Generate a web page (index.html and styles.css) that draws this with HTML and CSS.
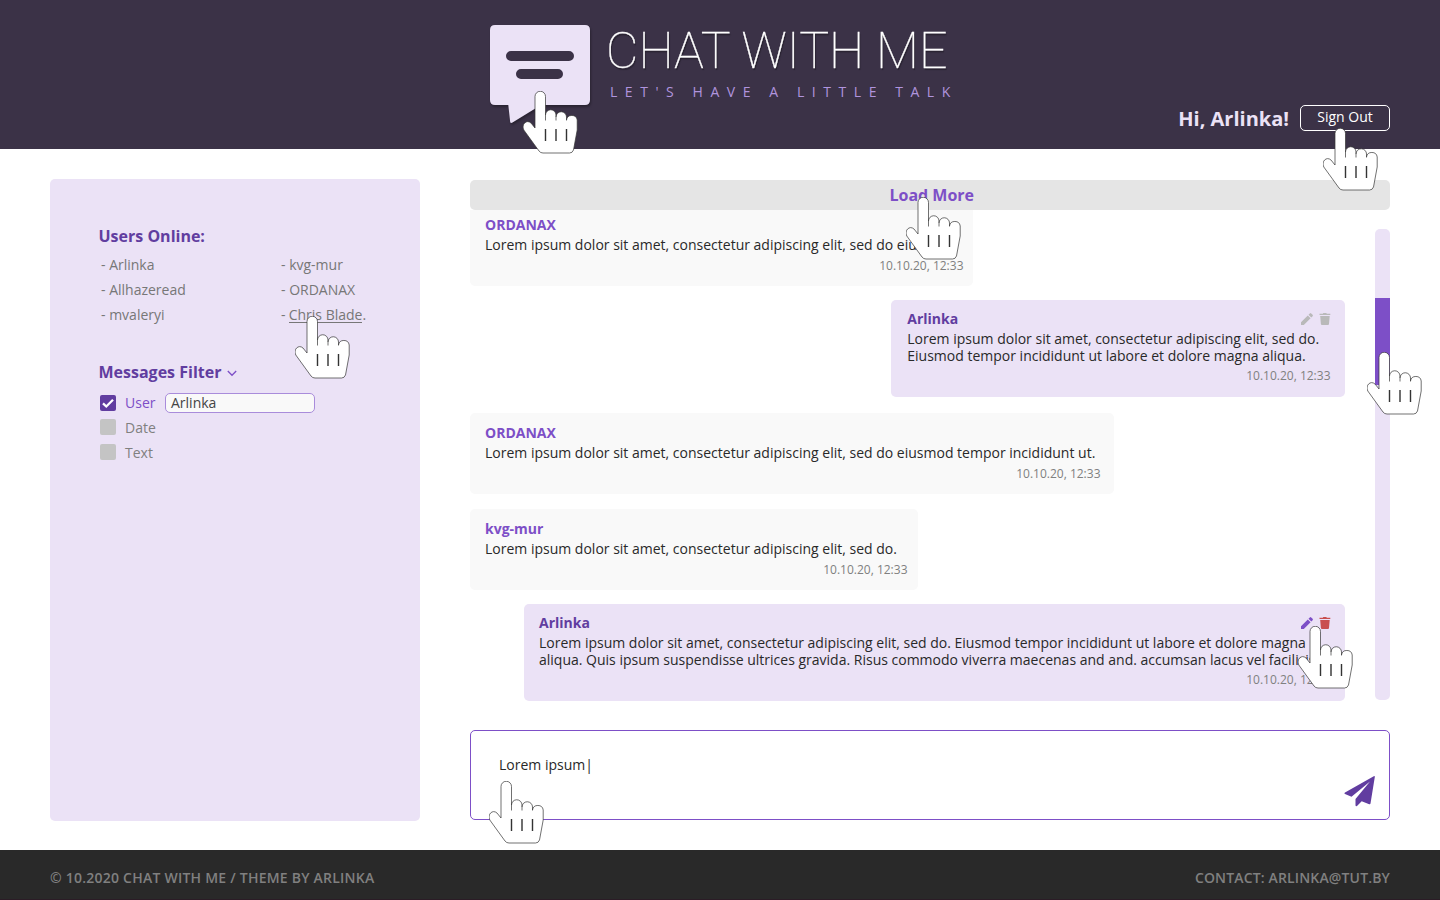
FILE: index.html
```html
<!DOCTYPE html>
<html lang="en">
<head>
<meta charset="utf-8">
<title>Chat With Me</title>
<link rel="stylesheet" href="styles.css">
</head>
<body>
<svg class="defs" width="0" height="0">
  <symbol id="hand" viewBox="0.5 0.5 56 64">
    <path class="hand-fill" d="M12.500 37.500V6a5.250 5.250 0 0 1 10.500 0V24.500a5.250 5.250 0 0 1 10.500 0V26.500a5.250 5.250 0 0 1 10.500 0V29.500a5.400 5.250 0 0 1 10.700 0V39.500L51 59.500Q50 62.500 47 62.500H20.500Q18 62.500 16.500 60.500L1.300 39.500C-1.500 34 4 28.500 8.500 32.500Z"/>
    <path class="hand-line" d="M12.500 37.500V6a5.250 5.250 0 0 1 10.500 0V30M23 24.500a5.250 5.250 0 0 1 10.500 0V30M33.500 26.500a5.250 5.250 0 0 1 10.500 0V30M44 29.500a5.400 5.250 0 0 1 10.700 0V39.500L51 59.500Q50 62.500 47 62.500H20.500Q18 62.500 16.500 60.500L1.300 39.500C-1.500 34 4 28.500 8.500 32.500L12.500 37.500"/>
    <path class="hand-bars" d="M23 38.500v12M33.500 38.500v12M44 38.500v12"/>
  </symbol>
  <symbol id="pencil" viewBox="0 0 12 12"><path d="M0 9.200 6.800 2.400 9.600 5.200 2.800 12H0ZM7.500 1.700 8.800 .4Q9.500 -.2 10.200.4L11.600 1.800Q12.200 2.500 11.600 3.200L10.300 4.500Z"/></symbol>
  <symbol id="trash" viewBox="0 0 12 12"><path d="M.5.800H3.800L4.300 0H7.300L7.800.800H11.300V2H.5ZM1.200 3H10.700L10 11Q9.900 12 9 12H3Q2 12 1.900 11Z"/></symbol>
</svg>

<header class="header">
  <div class="brand">
    <svg class="logo" viewBox="0 0 102 102" width="102" height="102">
      <path class="bubble" d="M5 0H95Q100 0 100 5V75Q100 80 95 80H51L22.500 97.500Q20.600 98.500 20.200 97L18.300 80H5Q0 80 0 75V5Q0 0 5 0Z"/>
      <path class="bubble-lines" d="M21 31H79M31 49H68"/>
    </svg>
    <div class="brand-text">
      <h1 class="title">CHAT WITH ME</h1>
      <p class="subtitle">LET'S HAVE A LITTLE TALK</p>
    </div>
  </div>
  <div class="account">
    <span class="greeting">Hi, Arlinka!</span>
    <button class="signout">Sign Out</button>
  </div>
</header>

<main class="main">
  <aside class="sidebar">
    <h2 class="side-title">Users Online:</h2>
    <ul class="users">
      <li>- Arlinka</li><li>- kvg-mur</li>
      <li>- Allhazeread</li><li>- ORDANAX</li>
      <li>- mvaleryi</li><li>- <span class="hovered">Chris Blade</span>.</li>
    </ul>
    <h2 class="side-title filter-title">Messages Filter
      <svg class="chevron" viewBox="0 0 10 7" width="10" height="7"><path d="M.8 1 5 5.300 9.200 1"/></svg>
    </h2>
    <div class="filters">
      <div class="filter active">
        <span class="box"><svg viewBox="0 0 16 16" width="16" height="16"><path d="M3 8.300 6.300 11.500 13 4.800"/></svg></span>
        <span class="filter-name">User</span><span class="field">Arlinka</span>
      </div>
      <div class="filter"><span class="box"></span><span class="filter-name">Date</span></div>
      <div class="filter"><span class="box"></span><span class="filter-name">Text</span></div>
    </div>
  </aside>

  <section class="chat">
    <button class="load">Load More</button>
    <div class="feed">
      <div class="messages">
        <article class="msg m1"><h3>ORDANAX</h3><p>Lorem ipsum dolor sit amet, consectetur adipiscing elit, sed do eiusmod.</p><time>10.10.20, 12:33</time></article>
        <article class="msg own m2">
          <div class="msg-head"><h3>Arlinka</h3><div class="tools"><svg><use href="#pencil"/></svg><svg><use href="#trash"/></svg></div></div>
          <p>Lorem ipsum dolor sit amet, consectetur adipiscing elit, sed do.<br>Eiusmod tempor incididunt ut labore et dolore magna aliqua.</p><time>10.10.20, 12:33</time>
        </article>
        <article class="msg m3"><h3>ORDANAX</h3><p>Lorem ipsum dolor sit amet, consectetur adipiscing elit, sed do eiusmod tempor incididunt ut.</p><time>10.10.20, 12:33</time></article>
        <article class="msg m4"><h3>kvg-mur</h3><p>Lorem ipsum dolor sit amet, consectetur adipiscing elit, sed do.</p><time>10.10.20, 12:33</time></article>
        <article class="msg own m5">
          <div class="msg-head"><h3>Arlinka</h3><div class="tools live"><svg><use href="#pencil"/></svg><svg><use href="#trash"/></svg></div></div>
          <p>Lorem ipsum dolor sit amet, consectetur adipiscing elit, sed do. Eiusmod tempor incididunt ut labore et dolore magna<br>aliqua. Quis ipsum suspendisse ultrices gravida. Risus commodo viverra maecenas and and. accumsan lacus vel facilisis.</p><time>10.10.20, 12:33</time>
        </article>
      </div>
      <div class="track"><div class="thumb"></div></div>
    </div>
    <div class="composer">
      <span class="draft">Lorem ipsum|</span>
      <svg class="send" viewBox="0 0 32 32" width="32" height="32"><path d="M31.200 1Q32 1 31.800 2L27.500 28.500Q27.200 29.600 26.200 29.200L18.700 26.200 14 31Q12.600 31.500 12.500 30.300V24L27 6.500 8.500 21.800 2 19Q.6 18.200 2 17.400Z"/></svg>
    </div>
  </section>
</main>

<footer class="footer"><span class="copyright">© 10.2020 CHAT WITH ME / THEME BY ARLINKA</span><span class="contact">CONTACT: ARLINKA@TUT.BY</span></footer>

<svg class="cursor c1"><use href="#hand"/></svg>
<svg class="cursor c2"><use href="#hand"/></svg>
<svg class="cursor c3"><use href="#hand"/></svg>
<svg class="cursor c4"><use href="#hand"/></svg>
<svg class="cursor c5"><use href="#hand"/></svg>
<svg class="cursor c6"><use href="#hand"/></svg>
<svg class="cursor c7"><use href="#hand"/></svg>
</body>
</html>
```

FILE: styles.css
```css
* { box-sizing: border-box; }
body { margin: 0; width: 1440px; height: 900px; overflow: hidden; position: relative; background: #fff; color: #292929; font: 14px/17px "Open Sans", sans-serif; display: flex; flex-direction: column; }
h1, h2, h3, p, ul { margin: 0; padding: 0; }
button { font-family: inherit; }
.defs { position: absolute; }

.header { height: 149px; flex: none; background: #3b3247; padding: 25px 50px 0 490px; display: flex; justify-content: space-between; }
.brand { display: flex; gap: 14px; }
.logo { overflow: visible; filter: drop-shadow(1px 2px 1px rgba(0,0,0,.3)); }
.bubble { fill: #ebe2f6; }
.bubble-lines { fill: none; stroke: #3b3247; stroke-width: 10; stroke-linecap: round; }
.brand-text { white-space: nowrap; }
.title { font: 100 50px/52px Roboto, sans-serif; color: #fff; text-shadow: 1px 2px 1px rgba(0,0,0,.35); letter-spacing: 0; -webkit-text-stroke: .3px #fff; }
.subtitle { margin-top: 6px; padding-left: 4px; font-size: 14px; line-height: 18px; letter-spacing: 7.56px; color: #b094de; }
.account { display: flex; gap: 11px; height: 26px; margin-top: 80px; align-items: center; }
.greeting { font-size: 20px; font-weight: 700; line-height: 26px; padding-top: 2px; color: #ebe2f6; white-space: nowrap; }
.signout { width: 90px; height: 26px; padding: 0 0 3px; border: 1px solid #fff; border-radius: 5px; background: none; color: #fff; font-size: 14px; line-height: 20px; }

.main { flex: 1; display: flex; gap: 50px; padding: 30px 50px 0; }
.sidebar { width: 370px; height: 642px; background: #ebe2f6; border-radius: 5px; padding: 46px 48px; }
.side-title { font-size: 16px; line-height: 22px; font-weight: 700; color: #613da0; padding-left: .5px; }
.users { list-style: none; margin-top: 5px; padding-left: 3px; display: grid; grid-template-columns: 180px 1fr; line-height: 25px; color: #777; white-space: nowrap; }
.hovered { display: inline-block; line-height: 17px; height: 17px; margin-left: -.5px; border-bottom: 1px solid #777; }
.filter-title { margin-top: 34px; display: flex; align-items: center; gap: 6px; }
.chevron { margin-top: 3px; }
.chevron path { fill: none; stroke: #7d4fc7; stroke-width: 1.300; }
.filters { margin-top: 7px; padding-left: 2px; }
.filter { height: 25px; display: flex; align-items: center; color: #808080; }
.filter + .filter .box { margin-top: -1px; }
.box { width: 16px; height: 16px; border-radius: 2px; background: #c4c4c4; margin-right: 9px; }
.active .box { background: #613da0; }
.box svg { display: block; }
.box path { fill: none; stroke: #fff; stroke-width: 2.300; }
.active .filter-name { color: #7d4fc7; width: 40px; }
.field { width: 150px; height: 20px; border: 1px solid #a98cdb; border-radius: 5px; background: #f9f9f9; color: #444; padding-left: 5px; line-height: 18px; }

.chat { width: 920px; padding-top: 1px; }
.load { display: block; width: 920px; height: 30px; border: 0; border-radius: 5px; background: #e5e5e5; color: #7d4fc7; font-size: 16px; font-weight: 700; padding: 0 0 0 3.5px; }
.feed { display: flex; justify-content: space-between; height: 491px; }
.messages { width: 875px; display: flex; flex-direction: column; align-items: flex-start; }
.msg { background: #f9f9f9; border-radius: 5px; padding: 10px 13.5px 0 15px; height: 81px; display: flex; flex-direction: column; white-space: nowrap; }
.msg h3 { font-size: 14px; line-height: 19px; font-weight: 700; color: #7d4fc7; }
.msg p { margin-top: 2px; }
.msg time { align-self: flex-end; font-size: 12px; line-height: 17px; margin-top: 4px; color: #808080; }
.own { align-self: flex-end; background: #ebe2f6; height: 97px; padding: 9px 14.5px 0 15px; }
.own h3 { color: #613da0; }
.own time { margin-top: 3px; }
.msg-head { display: flex; justify-content: space-between; align-items: center; }
.m1 { width: 503px; height: 76px; padding: 5px 9.5px 0 15px; border-radius: 0 0 5px 5px; }
.m2 { width: 454px; margin-top: 14px; padding-left: 16.3px; }
.m3 { width: 644px; margin-top: 16px; }
.m4 { width: 448px; margin-top: 15px; padding-right: 10.5px; }
.m5 { width: 821px; margin-top: 14px; }
.tools { display: flex; gap: 6px; fill: #b9b9b9; }
.tools svg { width: 12px; height: 12px; display: block; }
.live svg:first-child { fill: #7d4fc7; }
.live svg:last-child { fill: #c94f4f; }
.track { width: 15px; height: 471px; margin-top: 19px; padding-top: 69px; border-radius: 5px; background: #ebe2f6; }
.thumb { height: 87px; background: #7d4fc7; }

.composer { height: 90px; margin-top: 29px; border: 1px solid #7d4fc7; border-radius: 5px; padding: 25px 14px 0 28px; display: flex; justify-content: space-between; }
.send { fill: #613da0; margin-top: 19px; }
.footer { height: 50px; flex: none; padding: 6px 50px 0; display: flex; justify-content: space-between; align-items: center; background: #292929; border-bottom: 1px solid #2b1c26; color: #808080; font-weight: 600; }
.copyright { letter-spacing: .23px; }
.contact { letter-spacing: .15px; }

.cursor { position: absolute; width: 56px; height: 64px; }
.hand-fill { fill: #fff; }
.hand-line { fill: none; stroke: #333; stroke-width: .7; }
.hand-bars { fill: none; stroke: #333; stroke-width: 1.400; }
.c1 { left: 523px; top: 91px; }
.c2 { left: 1323px; top: 128px; }
.c3 { left: 295px; top: 316px; }
.c4 { left: 906px; top: 197px; }
.c5 { left: 1367px; top: 352px; }
.c6 { left: 1298px; top: 626px; }
.c7 { left: 489px; top: 781px; }
```
